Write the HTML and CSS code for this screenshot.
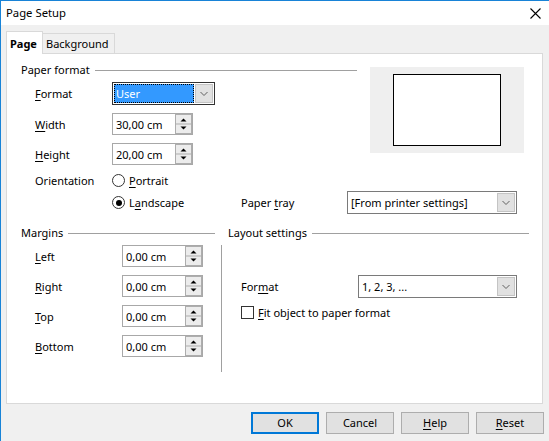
FILE: index.html
```html
<!DOCTYPE html>
<html>
<head>
<meta charset="utf-8">
<title>Page Setup</title>
<link rel="stylesheet" href="styles.css">
</head>
<body>
<div class="window">
  <div class="titlebar">
    <span class="title">Page Setup</span>
    <svg class="close" width="11" height="11" viewBox="0 0 11 11"><path d="M0.5 0.5L10.5 10.5M10.5 0.5L0.5 10.5" stroke="#000" stroke-width="1.1" fill="none"/></svg>
  </div>
  <div class="tabs">
    <div class="tab active">Page</div>
    <div class="tab inactive">Background</div>
  </div>
  <div class="panel">
    <div class="top">
      <div class="top-row">
        <div class="paper">
          <div class="group-head"><span class="group-title">Paper format</span><span class="rule"></span></div>
          <div class="rows">
            <div class="row r-format">
              <span class="lbl"><u>F</u>ormat</span>
              <div class="combo c-format">
                <span class="value sel">User</span>
                <svg class="drop" width="18" height="19" viewBox="0 0 18 19"><rect x="0.5" y="0.5" width="17" height="18" fill="#e1e1e1" stroke="#c4c4c4"/><path d="M5.5 8l3.5 3.5L12.5 8" stroke="#606060" fill="none"/></svg>
              </div>
            </div>
            <div class="row r-width">
              <span class="lbl"><u>W</u>idth</span>
              <div class="spin">
                <span class="value">30,00 cm</span>
                <svg class="spinbtn" width="17" height="20" viewBox="0 0 17 20"><rect x="0.5" y="0.5" width="16" height="19" fill="#ececec" stroke="#adadad"/><path d="M0 10h17" stroke="#adadad"/><path d="M5.5 7.5h6L8.5 4.5z" fill="#000"/><path d="M5.5 12.5h6L8.5 15.5z" fill="#000"/></svg>
              </div>
            </div>
            <div class="row r-height">
              <span class="lbl"><u>H</u>eight</span>
              <div class="spin">
                <span class="value">20,00 cm</span>
                <svg class="spinbtn" width="17" height="20" viewBox="0 0 17 20"><rect x="0.5" y="0.5" width="16" height="19" fill="#ececec" stroke="#adadad"/><path d="M0 10h17" stroke="#adadad"/><path d="M5.5 7.5h6L8.5 4.5z" fill="#000"/><path d="M5.5 12.5h6L8.5 15.5z" fill="#000"/></svg>
              </div>
            </div>
            <div class="row r-orient">
              <span class="lbl">Orientation</span>
              <span class="radio"></span>
              <span class="opt"><u>P</u>ortrait</span>
            </div>
          </div>
        </div>
        <div class="preview"><div class="page"></div></div>
      </div>
      <div class="tray-row">
        <div class="land">
          <span class="radio checked"></span>
          <span class="opt">L<u>a</u>ndscape</span>
        </div>
        <span class="tray-lbl">Paper <u>t</u>ray</span>
        <div class="combo c-tray">
          <span class="value">[From printer settings]</span>
          <svg class="drop" width="18" height="19" viewBox="0 0 18 19"><rect x="0.5" y="0.5" width="17" height="18" fill="#e1e1e1" stroke="#c4c4c4"/><path d="M5.5 8l3.5 3.5L12.5 8" stroke="#606060" fill="none"/></svg>
        </div>
      </div>
    </div>
    <div class="bottom">
      <div class="margins">
        <div class="group-head"><span class="group-title">Margins</span><span class="rule"></span></div>
        <div class="rows">
          <div class="row m-row first">
            <span class="lbl lbl-m"><u>L</u>eft</span>
            <div class="spin">
              <span class="value">0,00 cm</span>
              <svg class="spinbtn" width="17" height="20" viewBox="0 0 17 20"><rect x="0.5" y="0.5" width="16" height="19" fill="#ececec" stroke="#adadad"/><path d="M0 10h17" stroke="#adadad"/><path d="M5.5 7.5h6L8.5 4.5z" fill="#000"/><path d="M5.5 12.5h6L8.5 15.5z" fill="#000"/></svg>
            </div>
          </div>
          <div class="row m-row">
            <span class="lbl lbl-m"><u>R</u>ight</span>
            <div class="spin">
              <span class="value">0,00 cm</span>
              <svg class="spinbtn" width="17" height="20" viewBox="0 0 17 20"><rect x="0.5" y="0.5" width="16" height="19" fill="#ececec" stroke="#adadad"/><path d="M0 10h17" stroke="#adadad"/><path d="M5.5 7.5h6L8.5 4.5z" fill="#000"/><path d="M5.5 12.5h6L8.5 15.5z" fill="#000"/></svg>
            </div>
          </div>
          <div class="row m-row">
            <span class="lbl lbl-m"><u>T</u>op</span>
            <div class="spin">
              <span class="value">0,00 cm</span>
              <svg class="spinbtn" width="17" height="20" viewBox="0 0 17 20"><rect x="0.5" y="0.5" width="16" height="19" fill="#ececec" stroke="#adadad"/><path d="M0 10h17" stroke="#adadad"/><path d="M5.5 7.5h6L8.5 4.5z" fill="#000"/><path d="M5.5 12.5h6L8.5 15.5z" fill="#000"/></svg>
            </div>
          </div>
          <div class="row m-row">
            <span class="lbl lbl-m"><u>B</u>ottom</span>
            <div class="spin">
              <span class="value">0,00 cm</span>
              <svg class="spinbtn" width="17" height="20" viewBox="0 0 17 20"><rect x="0.5" y="0.5" width="16" height="19" fill="#ececec" stroke="#adadad"/><path d="M0 10h17" stroke="#adadad"/><path d="M5.5 7.5h6L8.5 4.5z" fill="#000"/><path d="M5.5 12.5h6L8.5 15.5z" fill="#000"/></svg>
            </div>
          </div>
        </div>
      </div>
      <div class="layout">
        <div class="group-head layout-head"><span class="group-title">Layout settings</span><span class="rule"></span></div>
        <div class="layout-body">
          <div class="row l-format">
            <span class="lbl lbl-l">For<u>m</u>at</span>
            <div class="combo c-layout">
              <span class="value">1, 2, 3, ...</span>
              <svg class="drop" width="18" height="19" viewBox="0 0 18 19"><rect x="0.5" y="0.5" width="17" height="18" fill="#e1e1e1" stroke="#c4c4c4"/><path d="M5.5 8l3.5 3.5L12.5 8" stroke="#606060" fill="none"/></svg>
            </div>
          </div>
          <div class="check-row">
            <span class="checkbox"></span>
            <span class="opt"><u>F</u>it object to paper format</span>
          </div>
        </div>
      </div>
    </div>
  </div>
  <div class="buttons">
    <button class="btn default">OK</button>
    <button class="btn">Cancel</button>
    <button class="btn"><u>H</u>elp</button>
    <button class="btn"><u>R</u>eset</button>
  </div>
</div>
</body>
</html>
```

FILE: styles.css
```css
html, body {
  margin: 0;
  padding: 0;
}
body {
  font-family: "Noto Sans", "Open Sans", sans-serif;
  font-size: 11px;
  color: #000;
  background: #f0f0f0;
}
u {
  text-decoration: underline;
  text-underline-offset: 2px;
}
.window {
  width: 549px;
  height: 441px;
  box-sizing: border-box;
  border-left: 1px solid #1883d7;
  border-top: 1px solid #1883d7;
  background: #f0f0f0;
  overflow: hidden;
}
.titlebar {
  height: 24px;
  background: #fff;
  display: flex;
  align-items: center;
  justify-content: space-between;
  padding-left: 5px;
  padding-right: 8px;
}
.title {
  font-size: 11.3px;
  line-height: 16px;
}
.close {
  display: block;
}
.tabs {
  height: 28px;
  display: flex;
  align-items: flex-end;
  padding-left: 5px;
}
.tab {
  box-sizing: border-box;
  border: 1px solid #d9d9d9;
  border-bottom: none;
  line-height: 18px;
  padding-left: 3px;
  white-space: nowrap;
}
.tab.active {
  width: 37px;
  height: 23px;
  padding-top: 3px;
  background: #fff;
  font-weight: bold;
  margin-bottom: -1px;
  position: relative;
  z-index: 1;
}
.tab.inactive {
  width: 73px;
  height: 20px;
  padding-top: 1px;
  margin-left: -1px;
  background: #f0f0f0;
}
.panel {
  margin-left: 5px;
  width: 537px;
  height: 351px;
  box-sizing: border-box;
  border: 1px solid #d9d9d9;
  background: #fff;
}
.top {
  padding: 8px 0 0 14px;
}
.top-row {
  display: flex;
  align-items: flex-start;
}
.paper {
  width: 336px;
}
.group-head {
  display: flex;
  align-items: center;
  height: 16px;
  line-height: 16px;
}
.group-title {
  white-space: nowrap;
}
.rule {
  flex: 1;
  height: 1px;
  background: #a0a0a0;
  margin-left: 5px;
}
.rows {
  padding-left: 14px;
}
.row {
  display: flex;
  align-items: center;
  height: 22px;
}
.lbl {
  width: 77px;
  flex: none;
  white-space: nowrap;
}
.r-format {
  margin-top: 4px;
  height: 23px;
}
.r-width {
  margin-top: 8px;
}
.r-height {
  margin-top: 8px;
}
.r-orient {
  margin-top: 9px;
  height: 13px;
}
.opt {
  white-space: nowrap;
}
.radio {
  width: 13px;
  height: 13px;
  box-sizing: border-box;
  border: 1px solid #333;
  border-radius: 50%;
  margin-right: 4px;
  flex: none;
  display: flex;
  align-items: center;
  justify-content: center;
  background: #fff;
}
.radio.checked::after {
  content: "";
  width: 6px;
  height: 6px;
  border-radius: 50%;
  background: #000;
}
.checkbox {
  width: 13px;
  height: 13px;
  box-sizing: border-box;
  border: 1px solid #333;
  margin-right: 4px;
  flex: none;
  background: #fff;
}
.combo {
  box-sizing: border-box;
  height: 23px;
  border: 1px solid #7a7a7a;
  display: flex;
  align-items: center;
  background: #fff;
  flex: none;
}
.combo .value {
  flex: 1;
  padding-left: 3px;
  white-space: nowrap;
  line-height: 19px;
}
.combo .drop {
  display: block;
  margin-right: 1px;
  flex: none;
}
.c-format {
  width: 103px;
  border-color: #333;
}
.combo .value.sel {
  background: #3399ff;
  color: #fff;
  height: 19px;
  margin: 0 1px 0 1px;
  padding-left: 2px;
  outline: 1px dotted #000;
  outline-offset: -1px;
}
.spin {
  box-sizing: border-box;
  width: 81px;
  height: 22px;
  border: 1px solid #a8a8a8;
  display: flex;
  align-items: center;
  background: #fff;
  flex: none;
}
.spin .value {
  flex: 1;
  padding-left: 3px;
  white-space: nowrap;
}
.spinbtn {
  display: block;
  margin-right: 0;
  flex: none;
}
.preview {
  margin-left: 13px;
  margin-top: 5px;
  width: 154px;
  height: 86px;
  background: #efefef;
  display: flex;
  align-items: center;
  justify-content: center;
}
.page {
  width: 108px;
  height: 72px;
  box-sizing: border-box;
  border: 1px solid #000;
  background: #fff;
}
.tray-row {
  margin-top: 4px;
  height: 23px;
  display: flex;
  align-items: center;
  padding-left: 91px;
}
.land {
  width: 129px;
  display: flex;
  align-items: center;
  flex: none;
}
.tray-lbl {
  width: 106px;
  flex: none;
  white-space: nowrap;
}
.c-tray {
  width: 170px;
}
.bottom {
  margin-top: 11px;
  padding-left: 14px;
  display: flex;
  align-items: flex-start;
}
.margins {
  width: 194px;
  flex: none;
}
.lbl-m {
  width: 87px;
}
.m-row {
  margin-top: 8px;
}
.m-row.first {
  margin-top: 4px;
}
.layout {
  width: 308px;
  margin-left: 6px;
  flex: none;
}
.layout-head {
  padding-left: 7px;
}
.layout-body {
  margin-top: 4px;
  height: 97px;
  border-left: 1px solid #a0a0a0;
  padding: 30px 0 0 19px;
}
.l-format {
  height: 23px;
}
.lbl-l {
  width: 117px;
}
.c-layout {
  width: 159px;
}
.check-row {
  margin-top: 8px;
  display: flex;
  align-items: center;
  height: 13px;
}
.buttons {
  margin-top: 8px;
  display: flex;
  justify-content: flex-end;
  gap: 7px;
  padding-right: 5px;
}
.btn {
  box-sizing: border-box;
  width: 68px;
  height: 22px;
  border: 1px solid #adadad;
  background: #e1e1e1;
  font-family: "Noto Sans", "Open Sans", sans-serif;
  font-size: 11px;
  color: #000;
  padding: 0;
  margin: 0;
  line-height: 18px;
}
.btn.default {
  border: 2px solid #0078d7;
}
```
